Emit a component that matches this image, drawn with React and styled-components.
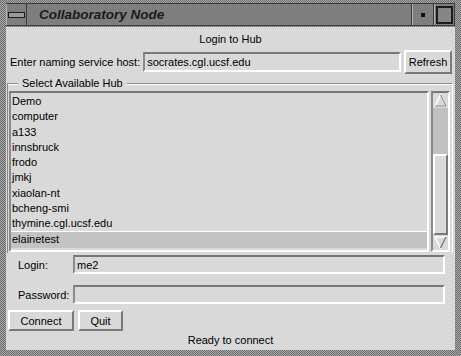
import React from "react";
import styled, { createGlobalStyle } from "styled-components";

const GlobalStyle = createGlobalStyle`
  body {
    margin: 0;
    font-family: "Liberation Sans", Arial, sans-serif;
    font-size: 11px;
    color: #000;
  }
`;

const stipple = `
  background-color: #8c8c8c;
  background-image: repeating-conic-gradient(#a6a6a6 0 25%, #6e6e6e 0 50%);
  background-size: 2px 2px;
`;

const Frame = styled.div`
  width: 461px;
  height: 356px;
  box-sizing: border-box;
  padding: 3px 6px 6px 6px;
  display: flex;
  flex-direction: column;
  ${stipple}
`;

const TitleBar = styled.div`
  height: 23px;
  display: flex;
  align-items: stretch;
  border-top: 1px solid #3c3c3c;
  border-bottom: 1px solid #3c3c3c;
  box-sizing: border-box;
`;

const TitleButton = styled.div`
  width: ${(p) => p.$w}px;
  flex: none;
  display: flex;
  align-items: center;
  justify-content: center;
  background: #7e7e7e;
  border-left: 1px solid #b0b0b0;
  border-right: 1px solid #3c3c3c;
  box-sizing: border-box;
`;

const MenuBar = styled.div`
  width: 15px;
  height: 4px;
  border: 1px solid #1c1c1c;
  background: #9a9a9a;
`;

const MinDot = styled.div`
  width: 4px;
  height: 4px;
  background: #111;
`;

const MaxBox = styled.div`
  width: 13px;
  height: 14px;
  border: 2px solid #1c1c1c;
  background: #868686;
`;

const TitleText = styled.div`
  flex: 1;
  display: flex;
  align-items: center;
  padding-left: 12px;
  background: #7e7e7e;
  font-weight: bold;
  font-style: italic;
  font-size: 13.5px;
  color: #1a1a1a;
  border-right: 1px solid #3c3c3c;
`;

const Client = styled.div`
  flex: 1;
  margin-top: 1px;
  background: #d9d9d9;
  display: flex;
  flex-direction: column;
`;

const Heading = styled.div`
  height: 23px;
  padding-top: 2px;
  box-sizing: border-box;
  line-height: 20px;
  text-align: center;
`;

const HostRow = styled.div`
  display: flex;
  align-items: center;
  height: 24px;
  padding: 0 3px 0 4px;
  gap: 3px;
`;

const Label = styled.span`
  flex: none;
  box-sizing: border-box;
  width: ${(p) => (p.$w ? `${p.$w}px` : "auto")};
  padding-left: ${(p) => p.$pl || 0}px;
`;

const Field = styled.div`
  flex: 1;
  height: ${(p) => p.$h || 20}px;
  box-sizing: border-box;
  border-top: 2px solid #777;
  border-left: 2px solid #8a8a8a;
  border-bottom: 2px solid #fff;
  border-right: 2px solid #fff;
  padding-left: 2px;
  display: flex;
  align-items: center;
  margin-right: ${(p) => p.$mr || 0}px;
`;

const Button = styled.div`
  flex: none;
  width: ${(p) => p.$w}px;
  height: ${(p) => p.$h || 21}px;
  box-sizing: border-box;
  display: flex;
  align-items: center;
  justify-content: center;
  border-top: 2px solid #fff;
  border-left: 2px solid #fff;
  border-bottom: 2px solid #7a7a7a;
  border-right: 2px solid #7a7a7a;
  background: #d9d9d9;
`;

const Group = styled.div`
  margin: 9px 2px 0 1px;
  border-top: 1px solid #8a8a8a;
  box-shadow: inset 0 1px 0 #fff;
  border-left: 1px solid #8a8a8a;
  border-right: 1px solid #fff;
  position: relative;
  padding: 7px 2px 1px 1px;
  display: flex;
  gap: 2px;
`;

const Legend = styled.span`
  position: absolute;
  top: -8px;
  left: 10px;
  padding: 0 4px;
  background: #d9d9d9;
  line-height: 15px;
`;

const List = styled.div`
  flex: 1;
  height: 161px;
  box-sizing: border-box;
  border-top: 2px solid #777;
  border-left: 2px solid #8a8a8a;
  border-bottom: 2px solid #fff;
  border-right: 2px solid #fff;
  padding-top: 1px;
`;

const Item = styled.div`
  height: 15.25px;
  line-height: 15px;
  padding-left: 1px;
  background: ${(p) => (p.$sel ? "#c3c3c3" : "transparent")};
  border-top: ${(p) => (p.$sel ? "1px solid #fff" : "0")};
`;

const Scroll = styled.div`
  width: 19px;
  height: 161px;
  box-sizing: border-box;
  border-top: 2px solid #777;
  border-left: 2px solid #8a8a8a;
  border-bottom: 2px solid #fff;
  border-right: 2px solid #fff;
  display: flex;
  flex-direction: column;
  background: #c0c0c0;
`;

const Arrow = styled.div`
  height: 15px;
  flex: none;
  display: flex;
  align-items: center;
  justify-content: center;
  background: #d9d9d9;
`;

const Trough = styled.div`
  flex: 1;
  display: flex;
  flex-direction: column;
  padding-top: 46px;
`;

const Thumb = styled.div`
  flex: 1;
  border-top: 2px solid #fff;
  border-left: 2px solid #fff;
  border-bottom: 2px solid #7a7a7a;
  border-right: 2px solid #7a7a7a;
  background: #d9d9d9;
`;

const FormRow = styled.div`
  display: flex;
  align-items: center;
  height: 19px;
  margin-top: ${(p) => p.$mt}px;
  padding-left: 3px;
`;

const ButtonRow = styled.div`
  display: flex;
  gap: 4px;
  padding-left: 2px;
  margin-top: 6px;
`;

const Status = styled.div`
  text-align: center;
  margin-top: 0;
  line-height: 18px;
`;

const hubs = [
  "Demo",
  "computer",
  "a133",
  "innsbruck",
  "frodo",
  "jmkj",
  "xiaolan-nt",
  "bcheng-smi",
  "thymine.cgl.ucsf.edu",
  "elainetest",
];

const App = () => {
  return (
    <>
      <GlobalStyle />
      <Frame>
        <TitleBar>
          <TitleButton $w={21}>
            <MenuBar />
          </TitleButton>
          <TitleText>Collaboratory Node</TitleText>
          <TitleButton $w={22}>
            <MinDot />
          </TitleButton>
          <TitleButton $w={21}>
            <MaxBox />
          </TitleButton>
        </TitleBar>
        <Client>
          <Heading>Login to Hub</Heading>
          <HostRow>
            <Label>Enter naming service host:</Label>
            <Field>socrates.cgl.ucsf.edu</Field>
            <Button $w={48} $h={24}>
              Refresh
            </Button>
          </HostRow>
          <Group>
            <Legend>Select Available Hub</Legend>
            <List>
              {hubs.map((h, i) => (
                <Item key={h} $sel={i === hubs.length - 1}>
                  {h}
                </Item>
              ))}
            </List>
            <Scroll>
              <Arrow>
                <svg width="13" height="13" viewBox="0 0 13 13">
                  <path d="M6.5 1 L12 12 L1 12 Z" fill="#d9d9d9" stroke="#fff" strokeWidth="1.5" />
                  <path d="M6.5 1 L12 12 L1 12" fill="none" stroke="#7a7a7a" strokeWidth="1" />
                </svg>
              </Arrow>
              <Trough>
                <Thumb />
              </Trough>
              <Arrow>
                <svg width="13" height="13" viewBox="0 0 13 13">
                  <path d="M1 1 L12 1 L6.5 12 Z" fill="#d9d9d9" stroke="#fff" strokeWidth="1.5" />
                  <path d="M12 1 L6.5 12" fill="none" stroke="#7a7a7a" strokeWidth="1.5" />
                </svg>
              </Arrow>
            </Scroll>
          </Group>
          <FormRow $mt={2}>
            <Label $w={64} $pl={9}>
              Login:
            </Label>
            <Field $h={19} $mr={10}>
              me2
            </Field>
          </FormRow>
          <FormRow $mt={11}>
            <Label $w={64} $pl={9}>
              Password:
            </Label>
            <Field $h={19} $mr={10} />
          </FormRow>
          <ButtonRow>
            <Button $w={66}>Connect</Button>
            <Button $w={45}>Quit</Button>
          </ButtonRow>
          <Status>Ready to connect</Status>
        </Client>
      </Frame>
    </>
  );
};

export default App;
